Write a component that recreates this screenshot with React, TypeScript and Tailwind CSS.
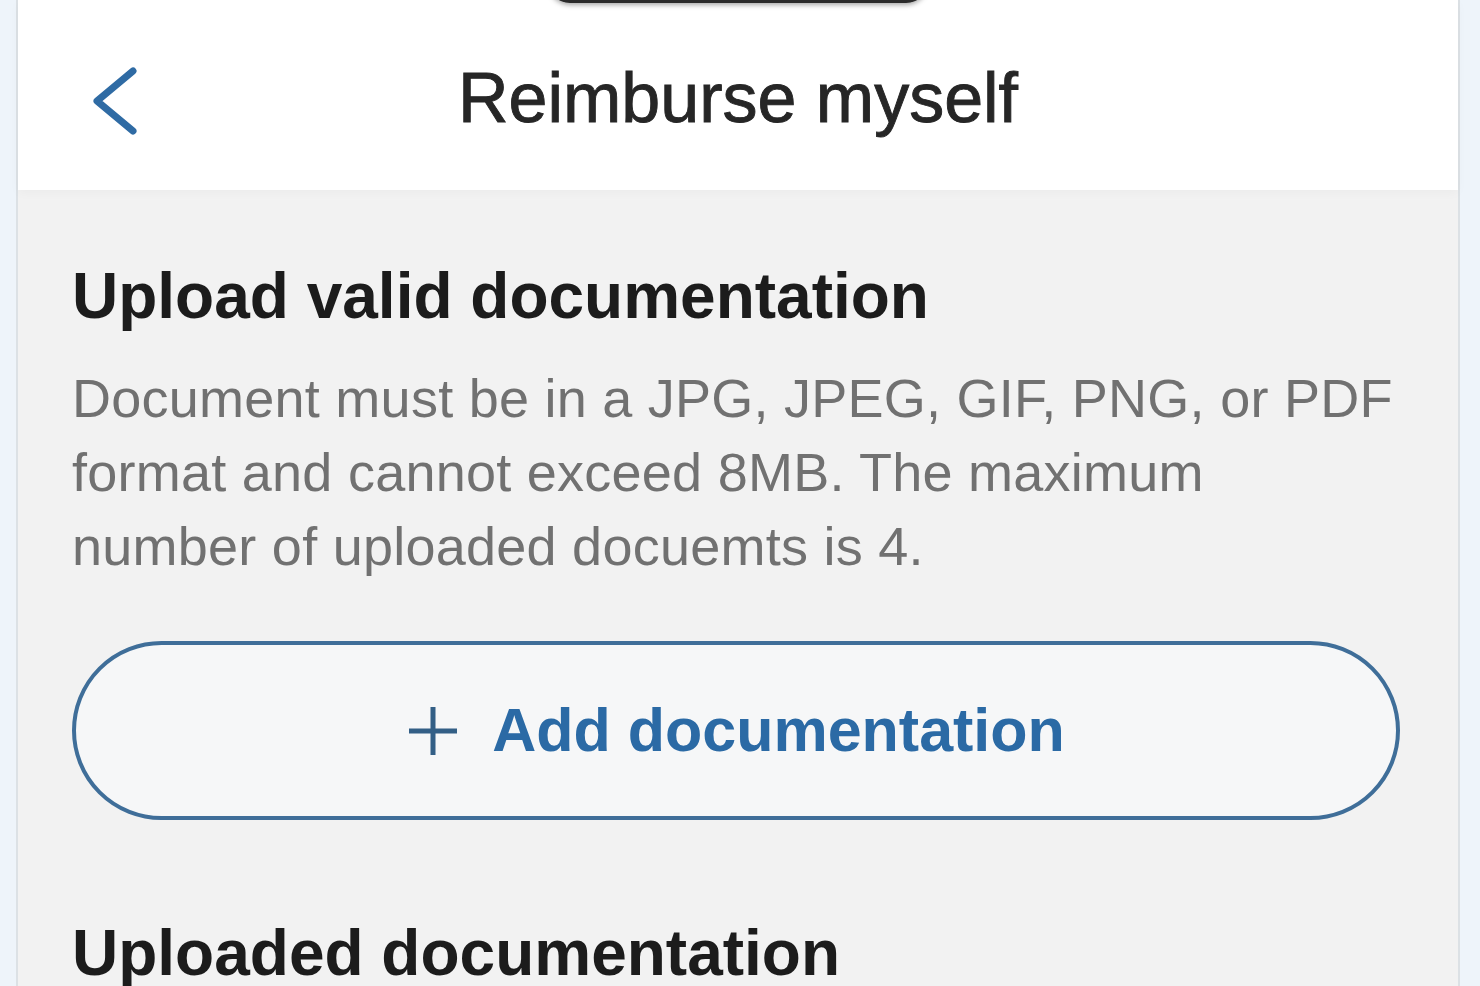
export default function App() {
  return (
    <div className="flex h-[986px] w-full overflow-hidden bg-[#eef4fa] pl-[16px] pr-[20px] font-['Liberation_Sans',Arial,sans-serif]">
      <div className="relative flex flex-1 flex-col border-x-2 border-[#dce1e5] bg-[#f2f2f2]">
        {/* dynamic island, cut off by the top of the shot */}
        <div className="absolute left-1/2 top-[-41px] h-[44px] w-[380px] -translate-x-1/2 rounded-full bg-[#2b2b2b] shadow-[0_2px_5px_rgba(0,0,0,0.35)]" />

        <header className="h-[190px] bg-white pt-[63px] shadow-[0_3px_10px_rgba(0,0,0,0.03)]">
          <div className="grid grid-cols-[1fr_auto_1fr] items-start">
            <button className="mt-[4px] justify-self-start pl-[74px]">
              <svg width="46" height="68" viewBox="0 0 46 68" fill="none">
                <path
                  d="M41 4 L5 34 L41 64"
                  stroke="#2f6ba4"
                  strokeWidth="7"
                  strokeLinecap="round"
                  strokeLinejoin="round"
                />
              </svg>
            </button>
            <h1 className="text-[70px] leading-[70px] text-[#262626] [-webkit-text-stroke:0.9px_#262626]">
              Reimburse myself
            </h1>
            <div />
          </div>
        </header>

        <main className="flex flex-col pl-[54px] pr-[58px] pt-[74px]">
          <h2 className="text-[64px] font-bold leading-[64px] text-[#1c1c1c]">
            Upload valid documentation
          </h2>
          <p className="mt-[33px] text-[54px] leading-[74px] tracking-[0.25px] text-[#717171]">
            Document must be in a JPG, JPEG, GIF, PNG, or PDF format and cannot exceed 8MB. The
            maximum
            <br />
            number of uploaded docuemts is 4.
          </p>

          <button className="mt-[58px] flex h-[179px] items-center justify-center gap-[33px] rounded-full border-[4px] border-[#3f6e99] bg-[#f6f7f8]">
            <svg width="52" height="52" viewBox="0 0 52 52" fill="none">
              <path d="M26 2 V50 M2 26 H50" stroke="#335f86" strokeWidth="5" />
            </svg>
            <span className="text-[61px] font-bold leading-none text-[#2b6aa5]">
              Add documentation
            </span>
          </button>

          <h2 className="mt-[101px] text-[64px] font-bold leading-[64px] text-[#1c1c1c]">
            Uploaded documentation
          </h2>
        </main>
      </div>
    </div>
  );
}
